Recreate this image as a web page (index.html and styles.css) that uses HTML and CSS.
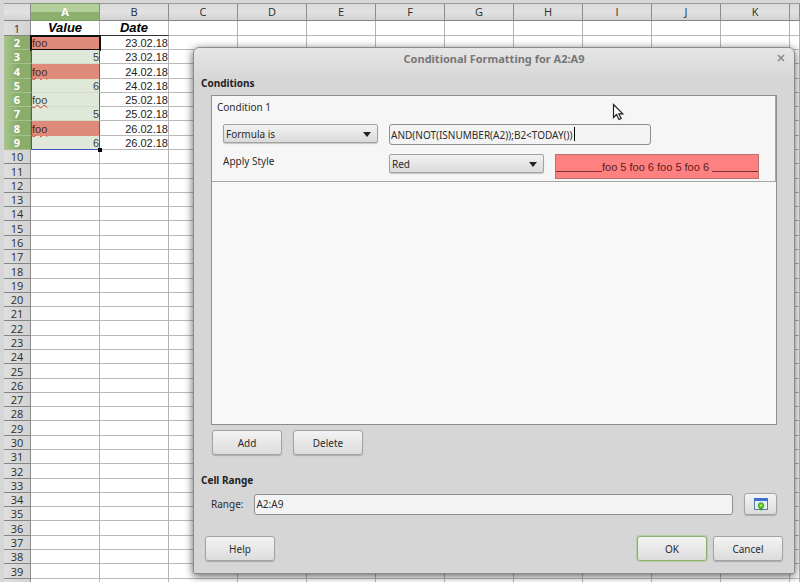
FILE: index.html
```html
<!DOCTYPE html>
<html lang="en">
<head>
  <meta charset="utf-8">
  <meta name="viewport" content="width=device-width, initial-scale=1">
  <title>Conditional Formatting for A2:A9</title>
  <link rel="stylesheet" href="styles.css">
</head>
<body>
  <table class="sheet">
    <thead>
      <tr>
        <th class="corner"></th>
        <th class="selected">A</th><th>B</th><th>C</th><th>D</th><th>E</th><th>F</th>
        <th>G</th><th>H</th><th>I</th><th>J</th><th>K</th><th class="rest"></th>
      </tr>
    </thead>
    <tbody id="rows"></tbody>
  </table>

  <form class="dialog" role="dialog" aria-labelledby="dialog-title">
    <header class="titlebar">
      <h1 id="dialog-title">Conditional Formatting for A2:A9</h1>
      <button type="button" class="close" aria-label="Close">
        <svg width="8" height="8" viewBox="0 0 8 8"><path d="M1 1l6 6M7 1l-6 6" stroke="#8a8a8a" stroke-width="1.6"/></svg>
      </button>
    </header>

    <h2>Conditions</h2>
    <div class="condition-list">
      <div class="condition">
        <h3>Condition 1</h3>
        <div class="condition-row">
          <div class="select">
            <select aria-label="Condition type"><option>Formula is</option></select>
          </div>
          <div class="formula">
            <input type="text" class="field" aria-label="Formula" value="AND(NOT(ISNUMBER(A2));B2&lt;TODAY())">
            <span class="caret"></span>
          </div>
        </div>
        <div class="condition-row">
          <label for="style">Apply Style</label>
          <div class="select">
            <select id="style"><option>Red</option></select>
          </div>
          <div class="preview">foo 5 foo 6 foo 5 foo 6</div>
        </div>
      </div>
    </div>
    <div class="list-buttons">
      <button type="button" class="btn">Add</button>
      <button type="button" class="btn">Delete</button>
    </div>

    <h2>Cell Range</h2>
    <div class="range-row">
      <label for="range">Range:</label>
      <input type="text" class="field" id="range" value="A2:A9">
      <button type="button" class="btn shrink" aria-label="Shrink">
        <svg width="14" height="14" viewBox="0 0 14 14">
          <rect x="0.5" y="1.5" width="13" height="11" fill="#e4eefb" stroke="#5d7a9c"/>
          <rect x="0" y="1" width="14" height="3" fill="#3f6fd0"/>
          <path d="M4.500 10.500H9.500L7 14z" fill="#3fa512"/>
          <circle cx="7" cy="8.500" r="2.800" fill="#62cb27" stroke="#3a9412" stroke-width="0.8"/>
          <circle cx="7" cy="8.500" r="1.100" fill="#b8ec8c"/>
        </svg>
      </button>
    </div>

    <footer class="actions">
      <button type="button" class="btn">Help</button>
      <button type="submit" class="btn default">OK</button>
      <button type="button" class="btn">Cancel</button>
    </footer>
  </form>

  <svg class="pointer" width="13" height="18" viewBox="0 0 13 18">
    <path d="M1.500 1.500V14.500L4.500 11.500L7 16.500L9.200 15.400L6.800 10.800H10.800z" fill="#fff" stroke="#222" stroke-width="1.200"/>
  </svg>

  <script src="sheet.js"></script>
</body>
</html>
```

FILE: styles.css
```css
* {
  box-sizing: border-box;
}
body {
  margin: 0;
  padding: 3px 0 0 4px;
  height: 100vh;
  overflow: hidden;
  background: #d6d6d6;
  color: #2c2c2c;
  font-family: "Noto Sans", sans-serif;
  font-size: 10px;
  line-height: 14px;
}

/* spreadsheet */
.sheet {
  table-layout: fixed;
  width: 100%;
  border-spacing: 0;
  background: #fff;
}
.sheet th {
  padding: 0;
  width: 69px;
  background: linear-gradient(#dadada, #e2e2e2 50%, #d2d2d2);
  border-right: 1px solid #8c8c8c;
  border-bottom: 1px solid #858585;
  font-family: "Open Sans", sans-serif;
  font-size: 11px;
  font-weight: normal;
  line-height: 13px;
}
.sheet thead th {
  height: 18px;
  padding-bottom: 2px;
  border-top: 1px solid #999;
}
.sheet .corner,
.sheet tbody th {
  width: 27px;
}
.sheet .rest {
  width: auto;
}
.sheet tbody th {
  background: linear-gradient(to right, #dfdfdf, #d2d2d2);
}
.sheet th.selected {
  background: linear-gradient(#b2cf9c 50%, #8eb06e 50%);
  border-color: #7d9c62;
  color: #fff;
  font-weight: bold;
}
.sheet tbody th.selected {
  background: linear-gradient(to right, #a9c68e, #8bad6b 50%);
  border-bottom-color: #a5bf8d;
}
.sheet td {
  padding: 2px 0 0;
  border-right: 1px solid #b4b4b4;
  border-bottom: 1px solid #b9b9b9;
  color: #222;
  font-family: "Liberation Sans", Arial, sans-serif;
  font-size: 11px;
  line-height: 11px;
  white-space: nowrap;
}
.sheet tbody tr {
  height: 14px;
}
.sheet tbody tr:nth-child(7n+1),
.sheet tbody tr:nth-child(7n+4) {
  height: 15px;
}
.sheet .title {
  padding: 0;
  border-bottom-color: #333;
  color: #000;
  font-size: 13px;
  font-weight: bold;
  font-style: italic;
  line-height: 14px;
  text-align: center;
}
.sheet .number {
  text-align: right;
}
.sheet .picked {
  position: relative;
  background: #dfe8d9;
  border-left: 1px solid #3f55c0;
  border-right-color: #3f55c0;
  border-bottom-color: #d3ddcc;
  color: #3c443a;
}
.sheet .picked.red {
  background: #e08a7b;
  border-bottom-color: #e08a7b;
  color: #4a2b28;
}
.sheet .picked.last {
  border-bottom-color: #3f55c0;
}
.sheet .picked.active {
  outline: 2px solid #111;
  outline-offset: -1px;
}
.typo {
  position: relative;
  z-index: 1;
  text-decoration: underline wavy #d0402f 1px;
  text-underline-offset: 0;
}
.handle {
  position: absolute;
  right: -3px;
  bottom: -3px;
  z-index: 1;
  width: 4px;
  height: 4px;
  background: #000;
}

/* dialog */
.dialog {
  position: absolute;
  top: 47px;
  left: 193px;
  right: 5px;
  z-index: 2;
  padding: 0 12px 12px;
  background: linear-gradient(#e6e6e6, #d6d6d6 32px);
  border: 1px solid #8c8c8c;
  border-radius: 6px 6px 2px 2px;
  box-shadow: 0 2px 8px rgba(0, 0, 0, 0.65);
}
.titlebar {
  display: flex;
  align-items: center;
  justify-content: center;
  position: relative;
  height: 22px;
}
h1, h2, h3 {
  margin: 0;
  font-size: 10px;
}
h1 {
  color: #777;
  font-size: 11px;
}
h2 {
  margin-left: -5px;
  color: #222;
}
h3 {
  margin-bottom: 10px;
  font-weight: normal;
}
.close {
  position: absolute;
  right: -3px;
  top: 6px;
  padding: 0;
  border: 0;
  background: none;
  line-height: 0;
}
.titlebar + h2 {
  margin-top: 6px;
}
.condition-list {
  height: 330px;
  margin: 5px 5px 0;
  background: #f8f8f8;
  border: 1px solid #8e8e8e;
}
.condition {
  height: 86px;
  padding: 4px 16px 0 5px;
  background: #f6f6f6;
  border-bottom: 1px solid #a6a6a6;
  border-right: 1px solid #a6a6a6;
}
.condition-row {
  display: flex;
  align-items: flex-start;
  gap: 11px;
  margin: 0 0 9px 6px;
}
.condition-row label {
  width: 155px;
}
.select {
  position: relative;
  width: 155px;
}
.select::after {
  content: "";
  position: absolute;
  right: 7px;
  top: 8px;
  border: 4px solid transparent;
  border-top: 5px solid #222;
  border-bottom: 0;
}
.select select {
  appearance: none;
  display: block;
  width: 100%;
  height: 19px;
  padding: 0 2px;
  border: 1px solid #a2a2a2;
  border-radius: 2px;
  background: linear-gradient(#f2f2f2, #dadada);
  box-shadow: 0 1px 1px rgba(0, 0, 0, 0.2);
  color: #2c2c2c;
  font: inherit;
}
.field {
  display: block;
  width: 100%;
  height: 21px;
  padding: 0 1px;
  border: 1px solid #8f8f8f;
  border-radius: 3px;
  background: #f3f3f3;
  color: #2c2c2c;
  font: inherit;
}
.formula {
  position: relative;
  width: 262px;
}
.caret {
  position: absolute;
  left: 185px;
  top: 3px;
  width: 1px;
  height: 14px;
  background: #000;
}
.preview {
  display: flex;
  flex: 1;
  height: 25px;
  padding-top: 5px;
  border: 1px solid #b97070;
  background: #ff8080;
  color: #5a2020;
  font-family: "Liberation Sans", Arial, sans-serif;
  font-size: 11px;
  white-space: nowrap;
}
.preview::before,
.preview::after {
  content: "";
  flex: 1;
  height: 11px;
  border-bottom: 1px solid #7a3030;
}
.preview::after {
  margin-left: 3px;
}
.btn {
  width: 70px;
  height: 25px;
  padding: 0;
  border: 1px solid #a3a3a3;
  border-radius: 3px;
  background: linear-gradient(#f3f3f3, #dcdcdc);
  box-shadow: 0 1px 1px rgba(0, 0, 0, 0.2);
  color: #2c2c2c;
  font: inherit;
}
.btn.default {
  border-color: #8fae74;
  box-shadow: 0 0 0 1px #b5cba2;
}
.list-buttons {
  display: flex;
  gap: 11px;
  margin: 5px 6px 18px;
}
.range-row {
  display: flex;
  align-items: center;
  gap: 11px;
  margin: 6px 5px 0;
}
.btn.shrink {
  flex: none;
  width: 33px;
  height: 22px;
  line-height: 0;
}
.actions {
  display: flex;
  gap: 6px;
  margin: 21px -1px 0;
}
.actions .default {
  margin-left: auto;
}

.pointer {
  position: absolute;
  left: 612px;
  top: 103px;
  z-index: 3;
}
```

FILE: sheet.js
```js
const columns = 12;
const rowCount = 39;
const data = [
  ['Value', 'Date'],
  ['foo', '23.02.18'],
  ['5', '23.02.18'],
  ['foo', '24.02.18'],
  ['6', '24.02.18'],
  ['foo', '25.02.18'],
  ['5', '25.02.18'],
  ['foo', '26.02.18'],
  ['6', '26.02.18']
];
const redRows = [2, 4, 8];

function addRow(n) {
  const tr = document.createElement('tr');
  const head = document.createElement('th');
  // the row after the last one is only a blank sliver
  head.textContent = n > rowCount ? '' : n;
  if (n >= 2 && n <= 9) head.className = 'selected';
  tr.appendChild(head);

  for (let c = 0; c < columns; c++) {
    const td = document.createElement('td');
    const text = (data[n - 1] || [])[c] || '';
    td.textContent = text;
    if (text && n === 1) td.classList.add('title');
    if (/^\d/.test(text)) td.classList.add('number');
    if (c === 0 && n >= 2 && n <= 9) {
      td.classList.add('picked');
      if (text === 'foo') td.innerHTML = '<span class="typo">foo</span>';
      if (redRows.includes(n)) td.classList.add('red');
      if (n === 2) {
        td.classList.add('active');
        td.textContent = text;
      }
      if (n === 9) {
        td.classList.add('last');
        td.insertAdjacentHTML('beforeend', '<span class="handle"></span>');
      }
    }
    tr.appendChild(td);
  }
  document.getElementById('rows').appendChild(tr);
}

for (let n = 1; n <= rowCount + 1; n++) addRow(n);
```
